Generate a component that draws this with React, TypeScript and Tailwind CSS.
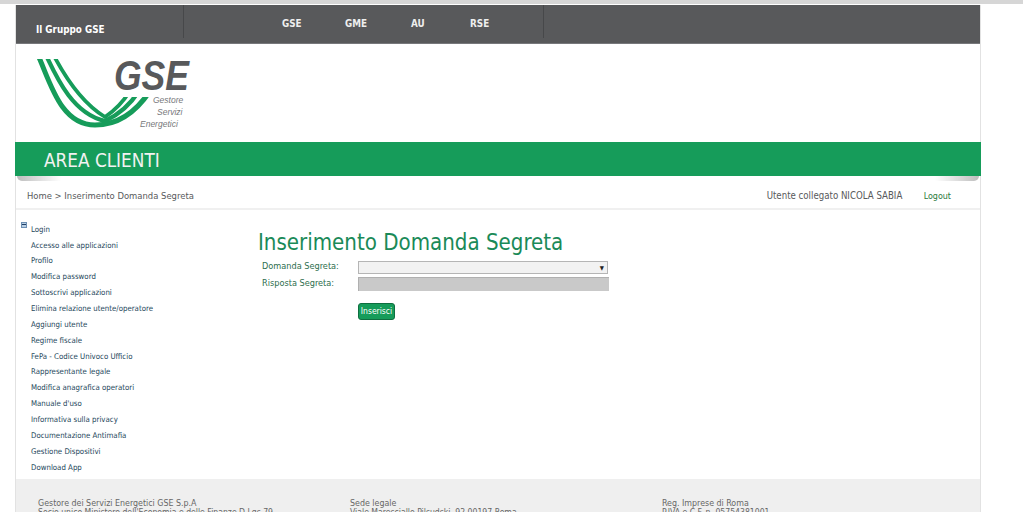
import React from 'react';

const menuItems = [
  'Accesso alle applicazioni',
  'Profilo',
  'Modifica password',
  'Sottoscrivi applicazioni',
  'Elimina relazione utente/operatore',
  'Aggiungi utente',
  'Regime fiscale',
  'FePa - Codice Univoco Ufficio',
  'Rappresentante legale',
  'Modifica anagrafica operatori',
  "Manuale d'uso",
  'Informativa sulla privacy',
  'Documentazione Antimafia',
  'Gestione Dispositivi',
  'Download App',
];

const footerCols = [
  { width: 'w-[312px]', lines: ['Gestore dei Servizi Energetici GSE S.p.A', "Socio unico Ministero dell'Economia e delle Finanze D.Lgs 79"] },
  { width: 'w-[312px]', lines: ['Sede legale', 'Viale Maresciallo Pilsudski, 92 00197 Roma'] },
  { width: 'flex-1', lines: ['Reg. Imprese di Roma', 'P.IVA e C.F. n. 05754381001'] },
];

const GseLogo = () => (
  <svg width="160" height="76" viewBox="32 60 160 76" fill="none">
    <defs>
      <clipPath id="strands">
        <path d="M30 60 H105 V98 H155 V135 H30 Z" />
      </clipPath>
    </defs>
    <g stroke="#169c5a" fill="none" clipPath="url(#strands)">
      <path d="M37.5 55 C50 82 60 126 95 126 C118 126 136 113 150 92" strokeWidth="5" />
      <path d="M45.5 55 C58 82 74 115 105 122 C118 116 130 106 139 92" strokeWidth="4.2" />
      <path d="M53 55 C66 80 82 104 105 118 C114 112 123 103 130 92" strokeWidth="3.8" />
    </g>
    <text x="114" y="91" fontFamily="'Liberation Sans', sans-serif" fontSize="43" fontWeight="700" fontStyle="italic" fill="#58595b" textLength="75" lengthAdjust="spacingAndGlyphs">GSE</text>
    <g fontFamily="'Liberation Sans', sans-serif" fontSize="8.5" fontStyle="italic" fill="#77787b">
      <text x="153" y="104">Gestore</text>
      <text x="157" y="116">Servizi</text>
      <text x="140" y="128">Energetici</text>
    </g>
  </svg>
);

export default function App() {
  return (
    <div className="w-[1023px] h-[512px] overflow-hidden bg-white font-['DejaVu_Sans',sans-serif] [font-stretch:condensed]">
      <div className="h-[4px] bg-[#d6d6d6] mb-px" />
      <div className="w-[965px] ml-[16px] border-r border-l-0 border-[#e2e2e2] shadow-[-1px_0_0_#e2e2e2]">
        {/* top nav */}
        <div className="h-[39px] bg-[#58595b] flex text-white font-bold text-[9.8px] border-b border-[#77787b]">
          <div className="w-[168px] pl-[20px] pt-[18px] border-r border-[#47484a] mb-[5px]">Il Gruppo GSE</div>
          <div className="w-[360px] flex pt-[12px] border-r border-[#47484a] mb-[5px] text-[#eeeeee]">
            <span className="ml-[98px] w-[63px]">GSE</span>
            <span className="w-[66px]">GME</span>
            <span className="w-[59px]">AU</span>
            <span>RSE</span>
          </div>
        </div>

        <div className="h-[98px] pl-[16px] pt-[15px]">
          <GseLogo />
        </div>

        <div className="relative -mx-px h-[34px] bg-[#169c5a] text-[#f2f2f2] text-[18.8px] pl-[29px] leading-[38px]">
          AREA CLIENTI
          <div className="absolute left-[2px] top-[34px] w-[44px] h-[5px] rounded-bl-[30px] bg-gradient-to-r from-[#bdbdbd] to-transparent blur-[0.5px]" />
          <div className="absolute right-[2px] top-[34px] w-[44px] h-[5px] rounded-br-[30px] bg-gradient-to-l from-[#bdbdbd] to-transparent blur-[0.5px]" />
        </div>

        {/* breadcrumb */}
        <div className="h-[34px] flex items-center justify-between pl-[11px] pr-[29px] border-b-2 border-[#f0f0f0] text-[9.4px] text-[#58595b]">
          <div className="pt-[9px]">Home &gt; Inserimento Domanda Segreta</div>
          <div className="pt-[9px] flex">
            <span className="w-[157px] text-[9.6px]">Utente collegato NICOLA SABIA</span>
            <span className="text-[#2a7a3c] text-[8.9px] leading-[14px]">Logout</span>
          </div>
        </div>

        <div className="flex h-[269px]">
          {/* side menu */}
          <div className="w-[242px] pl-[5px] pt-[12.5px] text-[7.8px] text-[#24465a]">
            <div className="flex h-[16px] relative">
              <span className="w-[6px] h-[6px] -mt-px bg-[#b9cfe4] border border-[#6d8fb3] flex items-center justify-center">
                <span className="w-[4px] h-px bg-[#1f3f66]" />
              </span>
              <span className="ml-[4px] leading-[14px]">Login</span>
            </div>
            <ul className="pl-[10px]">
              {menuItems.map(item => (
                <li key={item} className="h-[15.87px] leading-[14px]">{item}</li>
              ))}
            </ul>
          </div>

          {/* form */}
          <div className="flex-1 pt-[19px]">
            <h1 className="text-[22.1px] leading-[27px] text-[#1a8a58]">Inserimento Domanda Segreta</h1>
            <div className="mt-[3px] pl-[4px] flex flex-col text-[9.1px] text-[#2d6e4e]">
              <div className="flex items-center h-[16px]">
                <label className="w-[96px]">Domanda Segreta:</label>
                <div className="w-[250px] h-[13px] border border-[#b5b5b5] bg-[#f2f2f2] flex items-center justify-end pr-[3px] text-[6px] text-[#222222]">▼</div>
              </div>
              <div className="flex items-center h-[16px] mt-px">
                <label className="w-[96px]">Risposta Segreta:</label>
                <input disabled className="w-[251px] h-[14px] bg-[#c9c9c9] border-t border-l border-[#b0b0b0]" />
              </div>
              <button className="ml-[96px] mt-[11px] w-[37px] h-[17px] rounded-[3px] bg-[#169c5a] border border-[#0f6e40] text-white text-[8.5px]">Inserisci</button>
            </div>
          </div>
        </div>

        {/* footer */}
        <div className="h-[60px] bg-[#efefef] pl-[22px] pt-[20px] flex text-[8.8px] leading-[9px] text-[#666666]">
          {footerCols.map(col => (
            <div key={col.lines[0]} className={col.width}>
              {col.lines.map((line, i) => <div key={line} className={i === 1 ? 'text-[8.6px]' : ''}>{line}</div>)}
            </div>
          ))}
        </div>
      </div>
    </div>
  );
}
